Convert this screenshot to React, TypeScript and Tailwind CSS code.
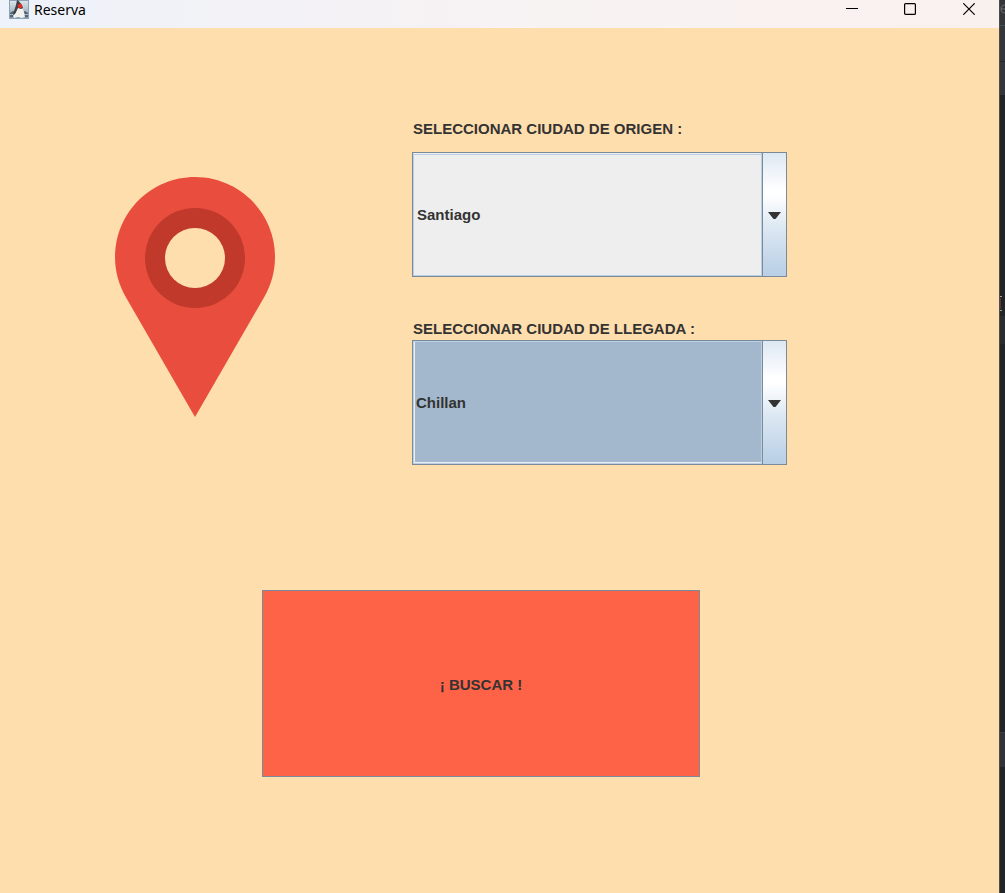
import { useState } from "react";

const cities = ["Santiago", "Chillan", "Valparaiso", "Concepcion"];

function DukeIcon() {
  return (
    <svg width="20" height="20" viewBox="0 0 20 20" aria-hidden="true">
      <defs>
        <linearGradient id="duke-bg" x1="0" y1="0" x2="0" y2="1">
          <stop offset="0" stopColor="#dce6ea" />
          <stop offset="0.5" stopColor="#b4c2cb" />
          <stop offset="1" stopColor="#7790a8" />
        </linearGradient>
      </defs>
      <rect x="0.5" y="0.5" width="19" height="18" fill="url(#duke-bg)" stroke="#8ba3b8" />
      <path d="M1 13l3-2 3 1-1 5H1zM19 13l-3-2-2 1 1 5h4z" fill="#526476" />
      <path d="M1 14h5v1H1zM14 14h5v1h-5z" fill="#a9bccb" />
      <path d="M9 6c3 0 5 3 6 6l1 5-3 1-4-1-4 1-1-2 3-4z" fill="#f3f2ef" />
      <path d="M8 0c2 1 5 4 6 8l-2 1-3-1-3 6-2 1c1-4 2-7 3-10z" fill="#3d4146" />
      <circle cx="11" cy="6" r="2.300" fill="#e32a2a" />
    </svg>
  );
}

function PinIcon() {
  return (
    <svg className="h-60 w-40 shrink-0" viewBox="0 0 160 240" aria-hidden="true">
      <path
        d="M80 0C35.800 0 0 35.800 0 80c0 14.500 3.900 28 10.600 39.700L80 240l69.400-120.300C156.100 108 160 94.500 160 80 160 35.800 124.200 0 80 0z"
        fill="#e84d3d"
      />
      <circle cx="80" cy="81" r="50" fill="#c0392b" />
      <circle cx="80" cy="81" r="30" fill="#ffdead" />
    </svg>
  );
}

type CitySelectProps = {
  id: string;
  label: string;
  value: string;
  onChange: (value: string) => void;
  highlighted?: boolean;
};

function CitySelect({ id, label, value, onChange, highlighted = false }: CitySelectProps) {
  return (
    <div className={highlighted ? "flex flex-col" : "flex flex-col gap-3"}>
      <label htmlFor={id} className="pl-px leading-[22px]">
        {label}
      </label>
      <div className="relative h-[125px] border border-[#7a8a99]">
        <select
          id={id}
          value={value}
          onChange={(e) => onChange(e.target.value)}
          className={
            highlighted
              ? "block size-full appearance-none border border-[#b8cfe5] bg-[#a3b8cc] pt-0.5 pr-7 pl-0.5 font-bold shadow-[inset_1px_-1px_0_#eeeeee] outline-none"
              : "block size-full appearance-none border border-[#b8cfe5] border-t-[#eeeeee] bg-[#eeeeee] pt-0.5 pr-7 pl-[3px] font-bold shadow-[inset_0_1px_0_#b8cfe5] outline-none"
          }
        >
          {cities.map((city) => (
            <option key={city}>{city}</option>
          ))}
        </select>
        <span className="pointer-events-none absolute inset-y-0 right-0 flex w-6 items-center justify-center border-l border-[#7a8a99] bg-linear-[180deg,#dde8f3_0%,#ffffff_30%,#ffffff_34%,#dde8f3_60%,#b8cfe5_100%] pt-0.5 shadow-[-1px_0_0_#b8cfe5]">
          <svg width="13" height="7" viewBox="0 0 13 7" aria-hidden="true">
            <path d="M0 0h13L7.500 7h-2z" fill="#333333" />
          </svg>
        </span>
      </div>
    </div>
  );
}

function TitleBar() {
  return (
    <header className="flex h-7 items-start justify-between bg-linear-to-r from-[#eef2fa] via-[#f7f2f3] to-[#f9f1ee] text-black">
      <div className="flex items-start gap-[5px] pl-[9px]">
        <DukeIcon />
        <h1 className="font-['Noto_Sans',sans-serif] text-sm leading-5 font-normal">Reserva</h1>
      </div>
      <div className="flex">
        <button type="button" aria-label="Minimizar" className="flex h-[18px] w-[58px] items-center justify-center">
          <svg width="12" height="12" viewBox="0 0 12 12">
            <path d="M0 5.500h12" stroke="#000" />
          </svg>
        </button>
        <button type="button" aria-label="Maximizar" className="flex h-[18px] w-[58px] items-center justify-center">
          <svg width="12" height="12" viewBox="0 0 12 12" fill="none">
            <rect x="0.600" y="0.600" width="10.800" height="10.800" rx="1" stroke="#000" strokeWidth="1.200" />
          </svg>
        </button>
        <button type="button" aria-label="Cerrar" className="flex h-[18px] w-[60px] items-center justify-center">
          <svg width="12" height="12" viewBox="0 0 12 12">
            <path d="M0.300 0.300l11.400 11.400M11.700 0.300L0.300 11.700" stroke="#000" strokeWidth="1.200" />
          </svg>
        </button>
      </div>
    </header>
  );
}

function EditorEdge() {
  return (
    <aside className="flex w-1.5 shrink-0 flex-col overflow-hidden border-l border-[#4d4b4d] bg-[#232425]" aria-hidden="true">
      <div className="h-[25px] bg-[#343739] pt-1">
        <svg width="5" height="10" viewBox="0 0 5 10">
          <path d="M5 1C2.500 1 1 2.500 1 5s1.500 4 4 4M1 5h4" fill="none" stroke="#6b6e70" />
        </svg>
      </div>
      <div className="h-9 border-t border-[#4a4d4f] bg-[#343739]" />
      <div className="h-[34px] border-t border-[#25282a] bg-[#343739]" />
      <div className="h-[221px] pt-[201px]">
        <svg width="5" height="15" viewBox="0 0 5 15">
          <path d="M0 0.500h2M0 14.500h2" stroke="#a0a3a5" />
          <path d="M0.500 2v11" stroke="#5a3a30" />
        </svg>
      </div>
      <div className="h-7 bg-[#2b2c2d]" />
      <div className="h-[388px]" />
      <div className="h-[35px] border-t border-[#3c3f41] bg-[#313437]" />
    </aside>
  );
}

export default function App() {
  const [origin, setOrigin] = useState("Santiago");
  const [destination, setDestination] = useState("Chillan");

  return (
    <div className="flex min-h-screen">
      <div className="flex min-w-0 flex-1 flex-col bg-[#ffdead]">
        <TitleBar />
        <main className="flex-1 font-['Liberation_Sans',Arial,sans-serif] text-[15px] font-bold text-[#333333]">
          <form onSubmit={(e) => e.preventDefault()} className="pt-[90px] pb-28">
            <div className="flex items-start gap-[137px] pr-[212px] pl-[115px]">
              <div className="pt-[59px]">
                <PinIcon />
              </div>
              <div className="flex min-w-0 flex-1 flex-col gap-[41px]">
                <CitySelect
                  id="origin"
                  label="SELECCIONAR CIUDAD DE ORIGEN :"
                  value={origin}
                  onChange={setOrigin}
                />
                <CitySelect
                  id="destination"
                  label="SELECCIONAR CIUDAD DE LLEGADA :"
                  value={destination}
                  onChange={setDestination}
                  highlighted
                />
              </div>
            </div>
            <div className="flex pt-[125px] pr-[299px] pl-[262px]">
              <button type="submit" className="h-[187px] flex-1 border border-[#7a8a99] bg-[#ff6347] pt-1">
                ¡ BUSCAR !
              </button>
            </div>
          </form>
        </main>
      </div>
      <EditorEdge />
    </div>
  );
}
